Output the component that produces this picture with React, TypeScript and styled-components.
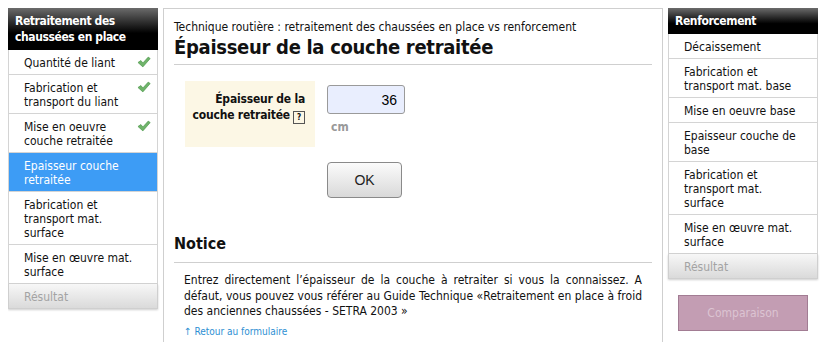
import * as React from "react";
import styled, {createGlobalStyle} from "styled-components";

const Global = createGlobalStyle`
body {
  margin: 8px;
  background: #fff;
  font-family: "DejaVu Sans Condensed", "DejaVu Sans", sans-serif;
  font-size: 12px;
  color: #111;
}
`

const Page = styled.div`
display: flex;
align-items: flex-start;
gap: 5px;
`

const Side = styled.div`
width: 150px;
flex: none;
`

const SideTitle = styled.div`
background: linear-gradient(#6b6b6b 0%, #1a1a1a 45%, #000 60%);
color: #fff;
font-weight: bold;
font-size: 12px;
letter-spacing: -0.4px;
line-height: 16px;
padding: 5px 7px 5px;
`

const Item = styled.div<{active?: boolean}>`
display: flex;
justify-content: space-between;
align-items: flex-start;
padding: 6px 6px 4px 15px;
line-height: 14px;
border: 1px solid #d4d4d4;
border-top: none;
background: ${p => p.active ? "#3d9cf5" : "#fff"};
color: ${p => p.active ? "#fff" : "#111"};
`

const ItemText = styled.span<{w: number}>`
width: ${p => p.w}px;
`

const Result = styled.div`
padding: 6px 6px 4px 15px;
line-height: 14px;
color: #a3a3a3;
background: linear-gradient(#f7f7f7, #dadada);
border: 1px solid #cfcfcf;
border-top: none;
box-shadow: 0 1px 2px rgba(0,0,0,0.2);
`

const Main = styled.div`
width: 478px;
flex: none;
border: 1px solid #cfcfcf;
border-bottom: none;
padding: 10px 10px 40px;
min-height: 300px;
`

const Crumb = styled.div`
line-height: 15px;
margin-top: 1px;
`

const Title = styled.h1`
margin: 0;
font-size: 20px;
letter-spacing: -0.3px;
line-height: 24px;
font-weight: bold;
padding-bottom: 5px;
border-bottom: 1px solid #cfcfcf;
`

const Form = styled.div`
display: flex;
gap: 12px;
margin: 16px 0 0 11px;
`

const Label = styled.div`
width: 120px;
height: 56px;
background: #fcf7e5;
padding: 10px 10px 0 0;
text-align: right;
font-weight: bold;
letter-spacing: -0.2px;
line-height: 16px;
white-space: nowrap;
`

const Help = styled.span`
display: inline-block;
width: 10px;
height: 11px;
border: 1px solid #555;
font-size: 8px;
line-height: 11px;
text-align: center;
font-weight: bold;
letter-spacing: 0;
vertical-align: -1px;
margin-left: 3px;
`

const Field = styled.div`
display: flex;
flex-direction: column;
padding-top: 4px;
`

const Input = styled.input`
width: 62px;
height: 27px;
padding: 0 7px;
border: 1px solid #9a9a9a;
border-radius: 3px;
background: #e9eefe;
font-family: "Liberation Sans", Arial, sans-serif;
font-size: 14px;
text-align: right;
box-sizing: content-box;
`

const Unit = styled.span`
color: #999;
font-weight: bold;
margin: 6px 0 0 4px;
`

const Ok = styled.button`
display: block;
margin: 15px 0 0 153px;
width: 75px;
height: 36px;
border: 1px solid #8a8a8a;
border-radius: 4px;
background: linear-gradient(#fbfbfb, #d9d9d9);
font-family: "Liberation Sans", Arial, sans-serif;
font-size: 14px;
color: #222;
`

const Notice = styled.h2`
margin: 35px 0 0;
font-size: 16px;
line-height: 22px;
font-weight: bold;
padding-bottom: 7px;
border-bottom: 1px solid #cfcfcf;
`

const Text = styled.p`
margin: 10px 10px 0;
text-align: justify;
line-height: 15.5px;
`

const Back = styled.a`
display: block;
margin: 6px 0 0 10px;
font-size: 10px;
color: #2e8fd3;
text-decoration: none;
`

const Compare = styled.div`
margin: 16px 10px 0;
height: 34px;
border: 1px solid #a27c93;
background: #c39db3;
color: #dcc4d2;
text-align: center;
line-height: 34px;
font-size: 12px;
`

const Check = () => (
    <svg width="14" height="12" viewBox="0 0 14 12">
        <path d="M1 6.5 L4 4.5 L6 7 L11.5 1 L13.5 2.5 L6 11 Z" fill="#6fb36a" stroke="#4f9a4d" strokeWidth="0.7"/>
    </svg>
)

let App: React.FC = () => {
    let left = [
        {t: "Quantité de liant", ok: true},
        {t: "Fabrication et transport du liant", ok: true},
        {t: "Mise en oeuvre couche retraitée", ok: true},
        {t: "Epaisseur couche retraitée", active: true},
        {t: "Fabrication et transport mat. surface"},
        {t: "Mise en œuvre mat. surface"},
    ]
    let right = [
        "Décaissement",
        "Fabrication et transport mat. base",
        "Mise en oeuvre base",
        "Epaisseur couche de base",
        "Fabrication et transport mat. surface",
        "Mise en œuvre mat. surface",
    ]
    return (
        <Page>
            <Global/>
            <Side>
                <SideTitle>Retraitement des chaussées en place</SideTitle>
                {left.map(i => (
                    <Item key={i.t} active={i.active}>
                        <ItemText w={116}>{i.t}</ItemText>
                        {i.ok && <Check/>}
                    </Item>
                ))}
                <Result>Résultat</Result>
            </Side>
            <Main>
                <Crumb>Technique routière : retraitement des chaussées en place vs renforcement</Crumb>
                <Title>Épaisseur de la couche retraitée</Title>
                <Form>
                    <Label>Épaisseur de la<br/>couche retraitée<Help>?</Help></Label>
                    <Field>
                        <Input defaultValue="36"/>
                        <Unit>cm</Unit>
                    </Field>
                </Form>
                <Ok>OK</Ok>
                <Notice>Notice</Notice>
                <Text>Entrez directement l’épaisseur de la couche à retraiter si vous la connaissez. A défaut, vous pouvez vous référer au Guide Technique «Retraitement en place à froid des anciennes chaussées - SETRA 2003 »</Text>
                <Back href="#">↑ Retour au formulaire</Back>
            </Main>
            <Side>
                <SideTitle>Renforcement</SideTitle>
                {right.map(t => (
                    <Item key={t}><ItemText w={118}>{t}</ItemText></Item>
                ))}
                <Result>Résultat</Result>
                <Compare>Comparaison</Compare>
            </Side>
        </Page>
    )
}

export default App
